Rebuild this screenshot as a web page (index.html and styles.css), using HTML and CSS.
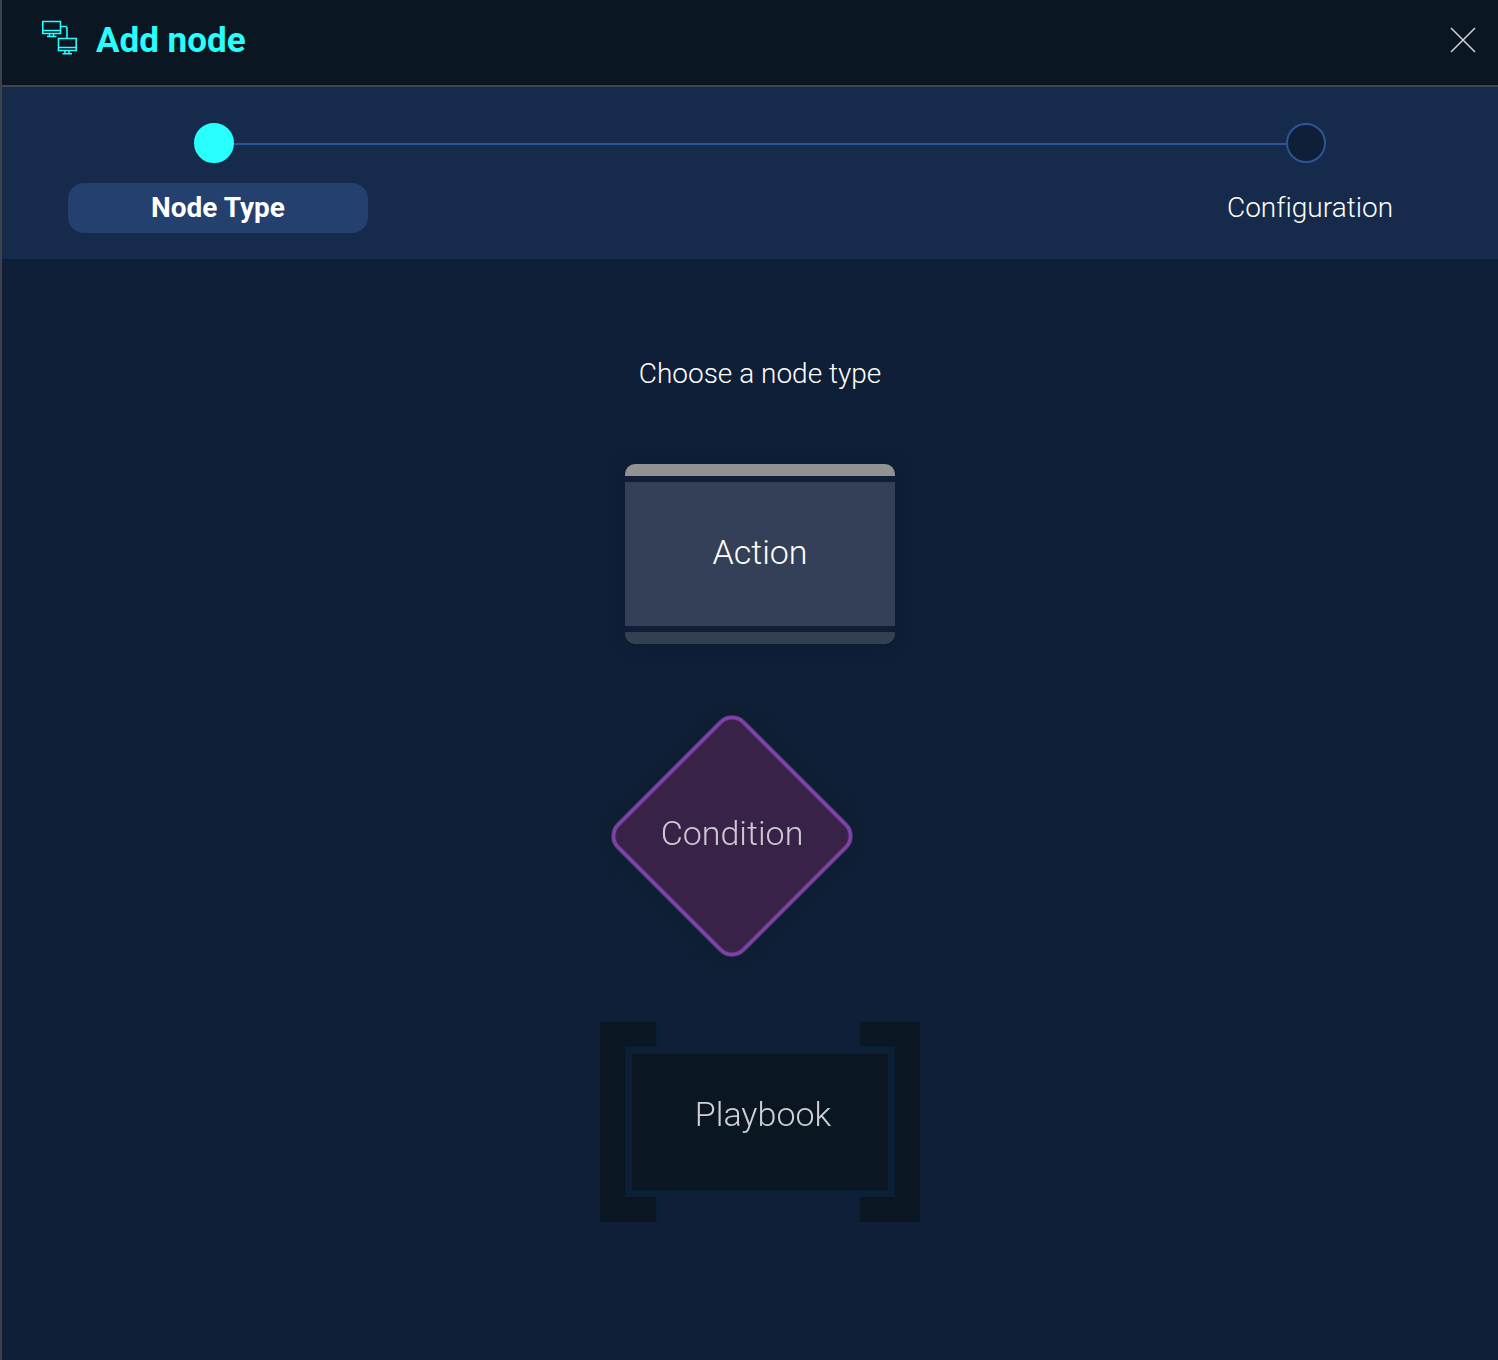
FILE: index.html
```html
<!DOCTYPE html>
<html lang="en">
<head>
<meta charset="utf-8">
<title>Add node</title>
<link rel="stylesheet" href="styles.css">
</head>
<body>
<section class="panel">
  <header class="panel-header">
    <svg class="panel-icon" width="36" height="36" viewBox="0 0 36 36" aria-hidden="true">
      <path d="M.8 2.500h17.700v12H.8zM.8 11.500h17.700M7.500 14.500v3M11.500 14.500v3M5 17.500h9.500M18.500 7.500h4.500q2 0 2 2v10M16.500 19.500h17.700v12H16.500zM16.500 28.500h17.700M23 31.500v3M27 31.500v3M20.500 34.800h9.500"/>
    </svg>
    <h1 class="panel-title">Add node</h1>
    <button class="close" type="button" aria-label="Close">
      <svg width="26" height="26" viewBox="0 0 26 26" aria-hidden="true"><path d="M1 1l24 24M25 1L1 25"/></svg>
    </button>
  </header>
  <nav class="stepper" aria-label="Steps">
    <div class="track" aria-hidden="true">
      <span class="dot dot-active"></span>
      <span class="line"></span>
      <span class="dot"></span>
    </div>
    <ol class="steps">
      <li class="step step-active" aria-current="step">Node Type</li>
      <li class="step">Configuration</li>
    </ol>
  </nav>
  <main class="content">
    <h2 class="prompt">Choose a node type</h2>
    <div class="nodes">
      <button class="node action" type="button">
        <span class="action-cap"></span>
        <span class="action-body">Action</span>
        <span class="action-foot"></span>
      </button>
      <button class="node condition" type="button">
        <svg class="shape" width="244" height="244" viewBox="0 0 244 244" aria-hidden="true">
          <rect class="diamond" x="33.500" y="33.500" width="177" height="177" rx="16" transform="rotate(45 122 122)"/>
        </svg>
        <span class="node-label">Condition</span>
      </button>
      <button class="node playbook" type="button">
        <svg class="shape" width="320" height="200" viewBox="0 0 320 200" aria-hidden="true">
          <path class="bracket" d="M0 0h56v24H25v151h31v25H0z"/>
          <path class="bracket bracket-right" d="M320 0h-60v24h35v151h-35v25h60z"/>
          <path class="bracket" d="M32 32h256v136H32z"/>
        </svg>
        <span class="node-label">Playbook</span>
      </button>
    </div>
  </main>
</section>
</body>
</html>
```
FILE: styles.css
```css
* { box-sizing: border-box; }

body {
  margin: 0;
  background: #0f1f37;
  color: #fff;
  font-family: Roboto, "Liberation Sans", sans-serif;
  font-size: 28px;
  font-weight: 300;
  font-variant-ligatures: none;
}

button {
  border: 0;
  padding: 0;
  background: none;
  color: inherit;
  font: inherit;
  cursor: pointer;
}

svg { display: block; }

.panel {
  min-height: 100vh;
  border-left: 2px solid #3b424b;
}

.panel-header {
  display: flex;
  align-items: center;
  gap: 18px;
  padding: 19px 22px 22px 40px;
  background: #0a1622;
  border-bottom: 2px solid #40464f;
}

.panel-icon {
  align-self: flex-start;
  fill: none;
  stroke: #26fffd;
  stroke-width: 1.6;
}

.panel-title {
  flex: 1;
  margin: 0;
  color: #26fffd;
  font-size: 35px;
  font-weight: 700;
  line-height: 44px;
}

.close { padding-bottom: 2px; }

.close svg {
  fill: none;
  stroke: #d2d5d8;
  stroke-width: 1.5;
}

.stepper {
  display: grid;
  gap: 20px;
  padding: 36px 38px 26px 66px;
  background: #162b4b;
}

.track {
  display: flex;
  align-items: center;
  margin: 0 134px 0 126px;
}

.dot {
  width: 40px;
  height: 40px;
  border: 2px solid #2c5596;
  border-radius: 50%;
  background: #0f1f37;
}

.dot-active {
  border-color: #26fffd;
  background: #26fffd;
}

.line {
  flex: 1;
  height: 2px;
  margin-top: 2px;
  background: #2c5596;
}

.steps {
  display: flex;
  justify-content: space-between;
  margin: 0;
  padding: 0;
  list-style: none;
}

.step {
  width: 300px;
  border-radius: 16px;
  line-height: 50px;
  text-align: center;
}

.step-active {
  background: #23406f;
  font-weight: 700;
}

.content {
  display: flex;
  flex-direction: column;
  align-items: center;
  padding: 99px 0 98px 20px;
}

.prompt {
  margin: 0 0 74px;
  font-size: 28px;
  font-weight: 300;
  line-height: 32px;
}

.nodes {
  display: flex;
  flex-direction: column;
  width: 320px;
}

.node {
  font-size: 34px;
  line-height: 40px;
}

.action {
  display: grid;
  grid-template-rows: 12px 144px 12px;
  gap: 6px;
  align-self: center;
  width: 270px;
  border-radius: 10px;
  box-shadow: 0 0 16px rgba(10, 22, 40, .4);
}

.action-cap {
  border-radius: 10px 10px 0 0;
  background: #929292;
}

.action-body {
  display: grid;
  place-items: center;
  padding-bottom: 4px;
  background: #344057;
}

.action-foot {
  border-radius: 0 0 10px 10px;
  background: #334052;
}

.condition,
.playbook {
  display: grid;
  place-items: center;
}

.condition {
  align-self: flex-start;
  margin: 70px 0 64px 10px;
}

.shape,
.node-label { grid-area: 1 / 1; }

.condition .shape { overflow: visible; }

.playbook .shape { overflow: hidden; }

.node-label {
  padding-bottom: 6px;
  opacity: .75;
}

.diamond {
  fill: #392248;
  stroke: #7d43a5;
  stroke-width: 4;
  filter: drop-shadow(0 0 12px rgba(10, 28, 38, .9));
}

.bracket {
  fill: #0a1622;
  filter: drop-shadow(1px 1px 1px #04232f);
}

.bracket-right {
  filter: drop-shadow(-1px 1px 1px #04232f);
}

.playbook .node-label {
  padding: 0 0 16px 6px;
  opacity: .8;
}
```
